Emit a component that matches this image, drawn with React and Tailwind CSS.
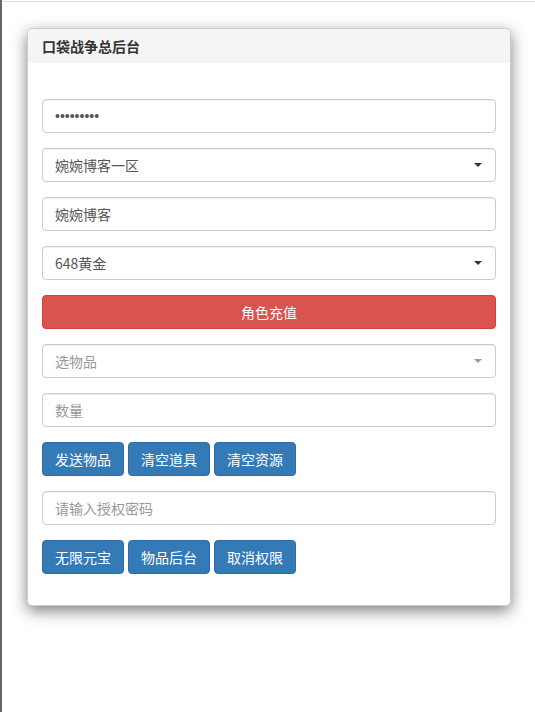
import React from 'react';

const font = { fontFamily: '"Noto Sans CJK SC", "Liberation Sans", sans-serif' };

const inputCls =
  'block w-full h-[34px] px-3 text-[14px] text-[#555] bg-white border border-[#ccc] rounded-[4px] shadow-[inset_0_1px_1px_rgba(0,0,0,0.075)] outline-none placeholder:text-[#999]';

const Caret = ({ light }) => (
  <span
    className={`absolute right-[14px] top-[15px] w-0 h-0 border-x-[4px] border-x-transparent border-t-[4px] ${
      light ? 'border-t-[#999]' : 'border-t-[#333]'
    }`}
  />
);

const Select = ({ text, placeholder }) => (
  <div className="relative">
    <div className={`${inputCls} flex items-center ${placeholder ? 'text-[#999]' : ''}`}>{text}</div>
    <Caret light={placeholder} />
  </div>
);

const BlueBtn = ({ children }) => (
  <button className="h-[34px] w-[82px] text-[14px] text-white bg-[#337ab7] border border-[#2e6da4] rounded-[4px]">
    {children}
  </button>
);

export default function App() {
  return (
    <div className="h-[712px] bg-white border-l-2 border-l-[#666] overflow-hidden" style={font}>
      <div className="border-t border-[#ddd] mt-[1px] pt-[26px] pl-[25px] pr-[24px]">
        <div className="bg-white border border-[rgba(0,0,0,0.2)] rounded-[5px] shadow-[0_5px_15px_rgba(0,0,0,0.5)]">
          <div className="h-[34px] bg-[#f5f5f5] rounded-t-[5px] px-[14px] flex items-center text-[14px] font-bold text-[#333]">
            口袋战争总后台
          </div>
          <div className="px-[14px] pt-[36px] pb-[31px] flex flex-col gap-[15px]">
            <input
              readOnly
              value="•••••••••"
              className={`${inputCls} font-['Liberation_Sans',sans-serif]`}
            />
            <Select text="婉婉博客一区" />
            <input readOnly value="婉婉博客" className={inputCls} />
            <Select text="648黄金" />
            <button className="h-[34px] w-full text-[14px] text-white bg-[#d9534f] border border-[#d43f3a] rounded-[4px]">
              角色充值
            </button>
            <Select text="选物品" placeholder />
            <input placeholder="数量" className={inputCls} />
            <div className="flex gap-[4px]">
              <BlueBtn>发送物品</BlueBtn>
              <BlueBtn>清空道具</BlueBtn>
              <BlueBtn>清空资源</BlueBtn>
            </div>
            <input placeholder="请输入授权密码" className={inputCls} />
            <div className="flex gap-[4px]">
              <BlueBtn>无限元宝</BlueBtn>
              <BlueBtn>物品后台</BlueBtn>
              <BlueBtn>取消权限</BlueBtn>
            </div>
          </div>
        </div>
      </div>
    </div>
  );
}
